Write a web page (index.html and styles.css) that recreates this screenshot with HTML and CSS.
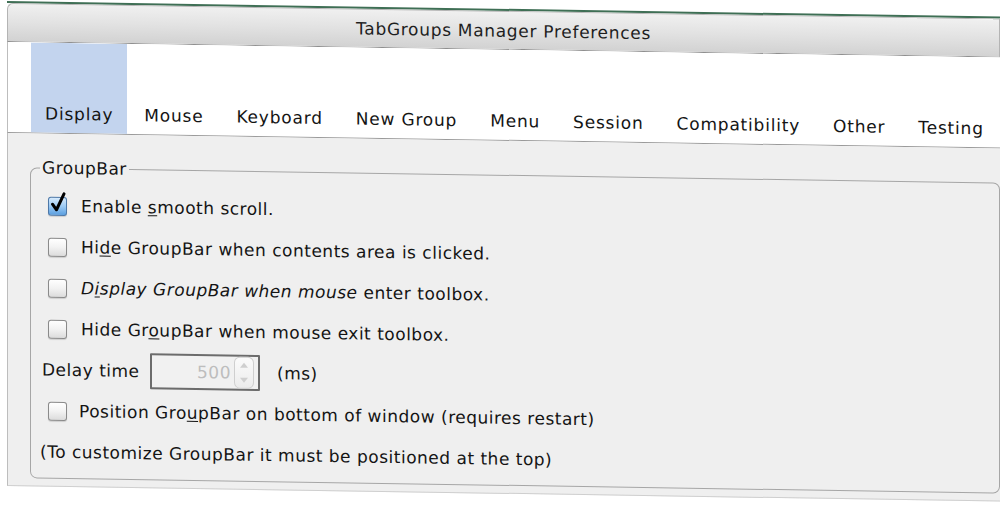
FILE: index.html
```html
<!DOCTYPE html>
<html>
<head>
  <title>TabGroups Manager Preferences</title>
  <link rel="stylesheet" href="styles.css">
</head>
<body>
  <div class="window">
    <div class="titlebar">TabGroups Manager Preferences</div>

    <div class="tabs">
      <div class="tab selected">Display</div>
      <div class="tab">Mouse</div>
      <div class="tab">Keyboard</div>
      <div class="tab">New Group</div>
      <div class="tab">Menu</div>
      <div class="tab">Session</div>
      <div class="tab">Compatibility</div>
      <div class="tab">Other</div>
      <div class="tab">Testing</div>
    </div>

    <div class="panel">
      <fieldset class="group">
        <legend>GroupBar</legend>

        <label class="row">
          <span class="check checked">
            <svg width="22" height="24" viewBox="0 0 22 24"><path d="M4.5 13.5 L8.5 19 L16 3" fill="none" stroke="#000" stroke-width="3" stroke-linecap="round" stroke-linejoin="round"/></svg>
          </span>
          <span>Enable <u>s</u>mooth scroll.</span>
        </label>

        <label class="row">
          <span class="check"></span>
          <span>Hi<u>d</u>e GroupBar when contents area is clicked.</span>
        </label>

        <label class="row">
          <span class="check"></span>
          <span><i>D<u>i</u>splay GroupBar when mouse</i> enter toolbox.</span>
        </label>

        <label class="row">
          <span class="check"></span>
          <span>Hide Gr<u>o</u>upBar when mouse exit toolbox.</span>
        </label>

        <div class="row delay">
          <span class="delay-label">Delay time</span>
          <span class="spinbox">
            <span class="spin-value">500</span>
            <span class="spin-arrows">
              <span class="arrow up"></span>
              <span class="arrow down"></span>
            </span>
          </span>
          <span class="unit">(ms)</span>
        </div>

        <label class="row position">
          <span class="check"></span>
          <span>Position Gro<u>u</u>pBar on bottom of window (requires restart)</span>
        </label>

        <div class="row note">(To customize GroupBar it must be positioned at the top)</div>
      </fieldset>
    </div>
  </div>
</body>
</html>
```

FILE: styles.css
```css
html, body {
  margin: 0;
  padding: 0;
  background-color: #ffffff;
  overflow: hidden;
}

body {
  font-family: "DejaVu Sans", Verdana, sans-serif;
  font-size: 17px;
  letter-spacing: 0.5px;
  color: #141414;
  height: 505px;
}

.window {
  margin-top: 1px;
  margin-left: 7px;
  width: 993px;
  border-top: 2px solid #3f6f55;
  transform: skewY(0.9deg);
  transform-origin: 0 0;
}

.titlebar {
  height: 39px;
  line-height: 38px;
  text-align: center;
  letter-spacing: 0.7px;
  color: #1e1e1e;
  background: linear-gradient(#f0f0f0, #e2e2e2 50%, #d2d2d2);
  border: 1px solid #b4b4b4;
  border-bottom-color: #8f8f8f;
  border-radius: 6px 0 0 0;
  box-sizing: border-box;
}

.tabs {
  display: flex;
  align-items: flex-end;
  height: 91px;
  padding-left: 23px;
  background-color: #ffffff;
  border-left: 1px solid #bdbdbd;
  border-bottom: 1px solid #9a9a9a;
  box-sizing: border-box;
  overflow: hidden;
}

.tab {
  height: 100%;
  display: flex;
  align-items: flex-end;
  flex-shrink: 0;
  white-space: nowrap;
  padding: 0 16px 9px 17px;
  line-height: 20px;
  letter-spacing: 0.8px;
  box-sizing: border-box;
}

.tab.selected {
  background-color: #c3d4ee;
  padding-left: 14px;
  padding-right: 14px;
}

.panel {
  background-color: #efefef;
  border-left: 1px solid #bdbdbd;
  border-bottom: 1px solid #cfcfcf;
  padding: 24px 0 7px 22px;
}

.group {
  margin: 0;
  border: 1px solid #a6a6a6;
  border-radius: 7px;
  padding: 8px 0 6px 9px;
  display: flex;
  flex-direction: column;
  gap: 1px;
}

.group legend {
  padding: 0 2px;
  line-height: 20px;
  margin-left: 0;
}

.row {
  display: flex;
  align-items: center;
  height: 40px;
}

.check {
  position: relative;
  width: 17px;
  height: 17px;
  margin: 0 14px 0 8px;
  border: 1px solid #8a8a8a;
  border-radius: 3px;
  background: linear-gradient(#ffffff, #f2f2f2 50%, #dcdcdc);
  box-shadow: 0 1px 1px rgba(0, 0, 0, 0.15);
  flex-shrink: 0;
}

.check.checked {
  border-color: #4d78a8;
  background: linear-gradient(#d7ebfd, #9ccaf4 50%, #5b9fe0);
}

.check svg {
  position: absolute;
  left: -1px;
  top: -7px;
}

.position .check {
  margin-right: 12px;
}

.delay-label {
  padding-left: 2px;
  width: 108px;
}

.spinbox {
  display: flex;
  align-items: center;
  justify-content: flex-end;
  width: 110px;
  height: 36px;
  border: 2px solid #6c6c6c;
  border-radius: 1px;
  background-color: #f1f1f1;
  box-sizing: border-box;
  padding-right: 4px;
}

.spin-value {
  color: #bdbdbd;
  margin-right: 3px;
}

.spin-arrows {
  display: flex;
  flex-direction: column;
  justify-content: space-around;
  align-items: center;
  width: 18px;
  height: 30px;
  border: 1px solid #cfcfcf;
  border-radius: 6px;
  background: linear-gradient(#fbfbfb, #ececec);
}

.arrow {
  width: 0;
  height: 0;
  border-left: 4px solid transparent;
  border-right: 4px solid transparent;
}

.arrow.up {
  border-bottom: 5px solid #cfcfcf;
}

.arrow.down {
  border-top: 5px solid #cfcfcf;
}

.unit {
  margin-left: 17px;
}

u {
  text-decoration-thickness: 1px;
  text-underline-offset: 2px;
}
```
